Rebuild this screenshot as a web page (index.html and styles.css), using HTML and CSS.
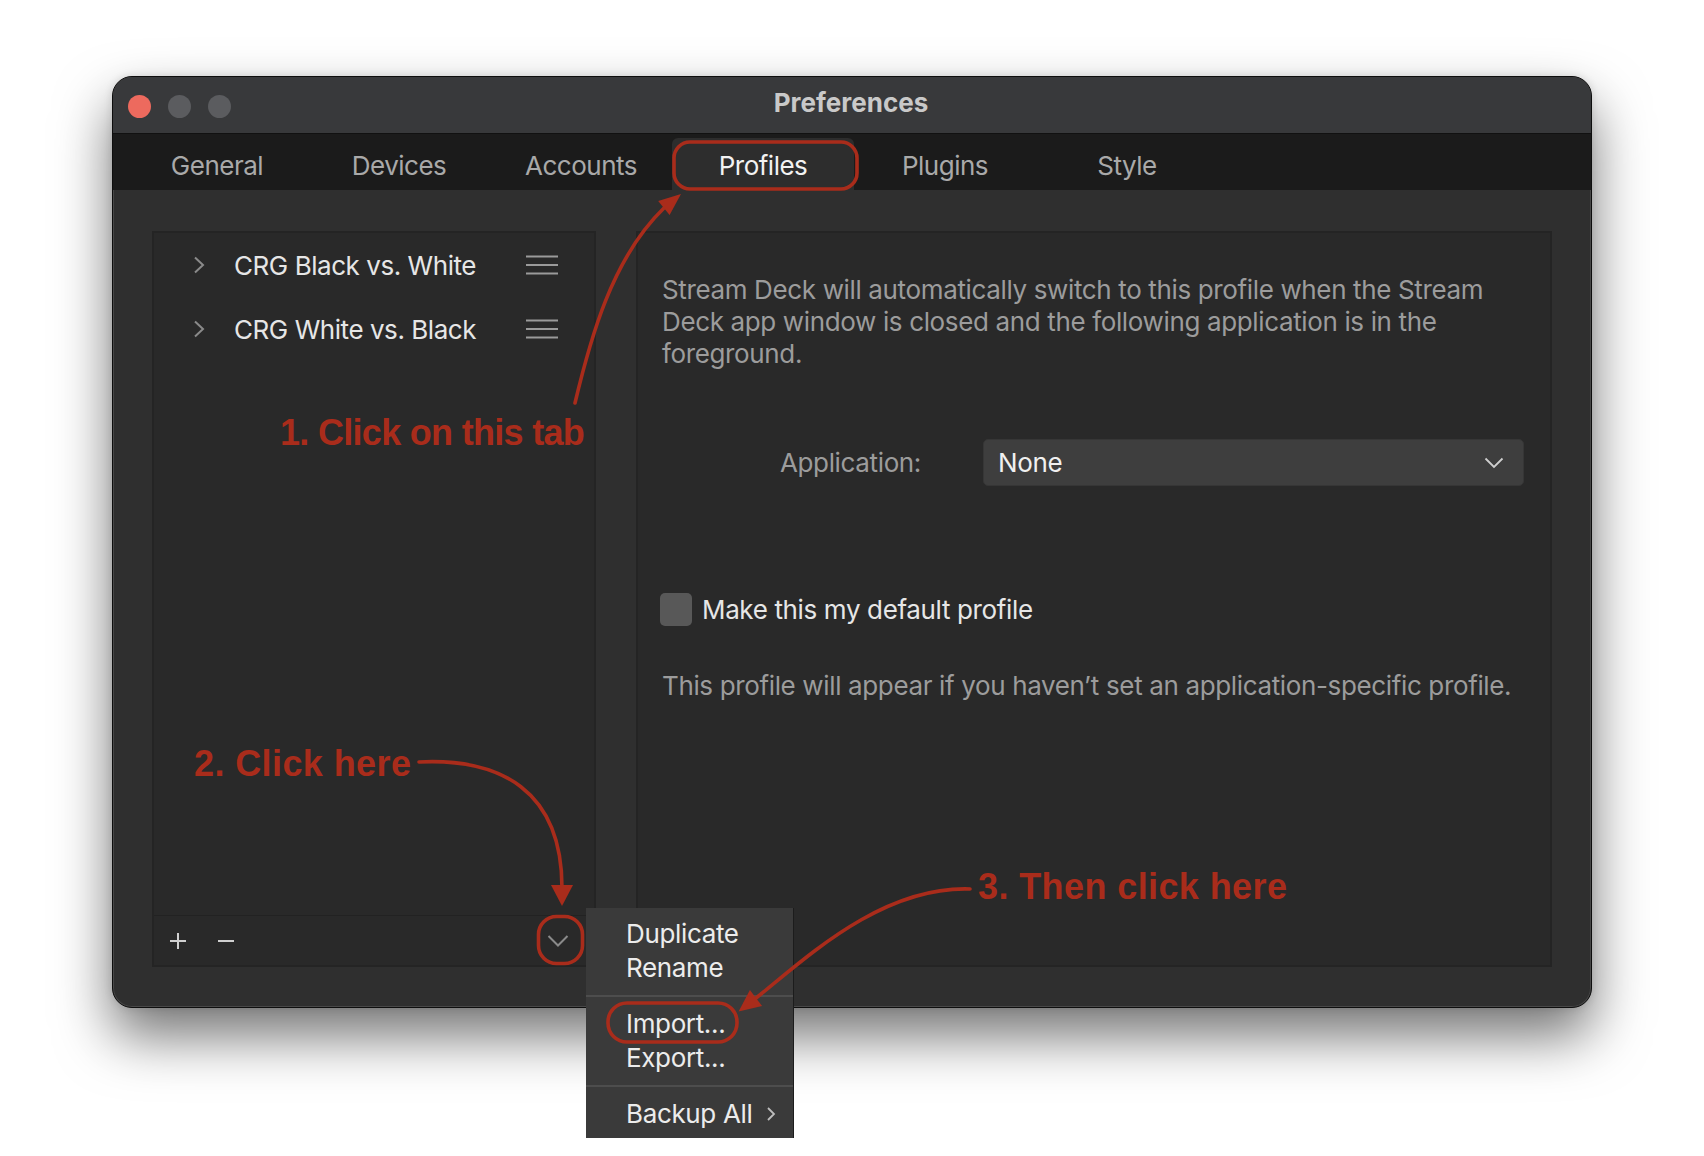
FILE: index.html
```html
<!DOCTYPE html>
<html lang="en">
<head>
<meta charset="utf-8">
<title>Preferences</title>
<link rel="stylesheet" href="styles.css">
</head>
<body>
<div class="stage">
  <div class="window">
    <div class="titlebar">
      <div class="lights">
        <span class="light red"></span>
        <span class="light"></span>
        <span class="light"></span>
      </div>
      <div class="title">Preferences</div>
      <div class="spacer"></div>
    </div>
    <div class="tabs">
      <div class="tab">General</div>
      <div class="tab">Devices</div>
      <div class="tab">Accounts</div>
      <div class="tab active">Profiles</div>
      <div class="tab">Plugins</div>
      <div class="tab">Style</div>
    </div>
    <div class="content">
      <div class="panel left-panel">
        <div class="list">
          <div class="row">
            <svg class="chev" width="12" height="18" viewBox="0 0 12 18"><path d="M2 1.5 L10 9 L2 16.5" fill="none" stroke="#8a8a8a" stroke-width="2"/></svg>
            <span class="name">CRG Black vs. White</span>
            <svg class="burger" width="32" height="20" viewBox="0 0 32 20"><path d="M0 1.5 H32 M0 10 H32 M0 18.5 H32" stroke="#9a9a9a" stroke-width="2"/></svg>
          </div>
          <div class="row">
            <svg class="chev" width="12" height="18" viewBox="0 0 12 18"><path d="M2 1.5 L10 9 L2 16.5" fill="none" stroke="#8a8a8a" stroke-width="2"/></svg>
            <span class="name">CRG White vs. Black</span>
            <svg class="burger" width="32" height="20" viewBox="0 0 32 20"><path d="M0 1.5 H32 M0 10 H32 M0 18.5 H32" stroke="#9a9a9a" stroke-width="2"/></svg>
          </div>
        </div>
        <div class="toolbar">
          <svg class="tool" width="18" height="18" viewBox="0 0 18 18"><path d="M9 1 V17 M1 9 H17" stroke="#d0d0d0" stroke-width="2"/></svg>
          <svg class="tool" width="18" height="18" viewBox="0 0 18 18"><path d="M1 9 H17" stroke="#d0d0d0" stroke-width="2"/></svg>
          <svg class="tool more" width="22" height="14" viewBox="0 0 22 14"><path d="M1.5 2 L11 11.5 L20.5 2" fill="none" stroke="#8a8a8a" stroke-width="2"/></svg>
        </div>
      </div>
      <div class="panel right-panel">
        <p class="desc">Stream Deck will automatically switch to this profile when the Stream Deck app window is closed and the following application is in the foreground.</p>
        <div class="app-row">
          <span class="app-label">Application:</span>
          <div class="select">
            <span>None</span>
            <svg width="20" height="12" viewBox="0 0 20 12"><path d="M1.5 1.5 L10 10 L18.5 1.5" fill="none" stroke="#cfcfcf" stroke-width="1.8"/></svg>
          </div>
        </div>
        <div class="check-row">
          <span class="checkbox"></span>
          <span class="check-label">Make this my default profile</span>
        </div>
        <p class="note">This profile will appear if you haven’t set an application-specific profile.</p>
      </div>
    </div>
    <div class="menu">
      <div class="item">Duplicate</div>
      <div class="item">Rename</div>
      <div class="sep"></div>
      <div class="item">Import...</div>
      <div class="item">Export...</div>
      <div class="sep"></div>
      <div class="item sub">Backup All
        <svg width="10" height="16" viewBox="0 0 10 16"><path d="M2 2 L8 8 L2 14" fill="none" stroke="#bdbdbd" stroke-width="1.8"/></svg>
      </div>
    </div>
  </div>

  <svg class="marks" width="1704" height="1156" viewBox="0 0 1704 1156">
    <g fill="none" stroke="#a92c1b" stroke-width="3.6" stroke-linecap="round">
      <rect x="674" y="142" width="183" height="47" rx="16"/>
      <rect x="538.5" y="916.5" width="44" height="47" rx="18"/>
      <rect x="608" y="1003" width="129" height="39" rx="19"/>
      <path d="M575 403 C 590 340 612 258 664 208"/>
      <path d="M419 762 C 500 758 562 790 562 888"/>
      <path d="M970 889 C 880 886 803 961 756 998"/>
    </g>
    <g fill="#a92c1b">
      <polygon points="681,194 669.6,214.9 658.2,200.9"/>
      <polygon points="562,906 551,885 573,885"/>
      <polygon points="738.6,1011.4 762.1,1005.9 749.9,990.1"/>
    </g>
  </svg>
  <div class="callout c1">1. Click on this tab</div>
  <div class="callout c2">2. Click here</div>
  <div class="callout c3">3. Then click here</div>
</div>
</body>
</html>
```

FILE: styles.css
```css
* { box-sizing: border-box; }

html, body {
  margin: 0;
  background: #ffffff;
}

body {
  font-family: Inter, "Noto Sans", sans-serif;
  width: 1704px;
  height: 1156px;
  overflow: hidden;
}

.stage {
  position: relative;
  width: 1704px;
  height: 1156px;
  padding: 76px 0 0 112px;
}

.window {
  position: relative;
  width: 1480px;
  height: 932px;
  border-radius: 20px;
  background: #2f2f2f;
  border: 1px solid #0e0e0e;
  box-shadow: 0 28px 55px rgba(0, 0, 0, 0.55), 0 0 8px rgba(0, 0, 0, 0.12), inset 0 0 0 1px rgba(255, 255, 255, 0.12);
  display: flex;
  flex-direction: column;
}

/* Title bar */
.titlebar {
  height: 57px;
  background: #38393b;
  border-radius: 19px 19px 0 0;
  border-bottom: 1px solid #111111;
  display: grid;
  grid-template-columns: 1fr auto 1fr;
  align-items: center;
}

.lights {
  display: flex;
  gap: 17px;
  padding-left: 15px;
  padding-top: 2px;
}

.light {
  width: 23px;
  height: 23px;
  border-radius: 50%;
  background: #5b5c5f;
}

.light.red { background: #ed6a5e; }

.title {
  color: #c9c9c9;
  font-weight: 700;
  font-size: 26px;
  letter-spacing: 0;
  margin-top: -5px;
  margin-left: -2px;
}

/* Tabs */
.tabs {
  height: 56px;
  background: #1b1b1b;
  display: flex;
  align-items: flex-end;
  padding-left: 13px;
}

.tab {
  width: 182px;
  height: 52px;
  padding-top: 12px;
  text-align: center;
  font-size: 26px;
  line-height: 32px;
  letter-spacing: -0.5px;
  color: #a9a9a9;
}

.tab.active {
  background: #2d2d2d;
  border-radius: 6px 6px 0 0;
  color: #f2f2f2;
}

/* Content */
.content {
  flex: 1;
  display: flex;
  gap: 40px;
  padding: 41px 39px 40px 39px;
}

.panel {
  background: #292929;
  border: 2px solid #242424;
}

.left-panel {
  width: 444px;
  display: flex;
  flex-direction: column;
}

.list { flex: 1; }

.row {
  height: 64px;
  display: flex;
  align-items: center;
  padding-left: 39px;
  padding-right: 36px;
  color: #e6e6e6;
  font-size: 26px;
  letter-spacing: -0.45px;
}

.row .name {
  flex: 1;
  margin-left: 29px;
}

.toolbar {
  height: 50px;
  border-top: 1px solid #222222;
  display: flex;
  align-items: center;
  padding-left: 15px;
  padding-right: 25px;
}

.tool + .tool { margin-left: 30px; }

.tool.more { margin-left: auto; }

.right-panel {
  flex: 1;
  padding: 41px 24px 0 24px;
  font-size: 26px;
  letter-spacing: -0.36px;
}

.desc {
  margin: 0;
  color: #9c9c9c;
  line-height: 32px;
}

.app-row {
  display: flex;
  align-items: center;
  margin-top: 69px;
  padding-right: 2px;
}

.app-label {
  width: 259px;
  text-align: right;
  color: #9c9c9c;
}

.select {
  flex: 1;
  margin-left: 62px;
  height: 47px;
  background: #3e3e3e;
  border: 1px solid #363636;
  border-radius: 5px;
  display: flex;
  align-items: center;
  justify-content: space-between;
  padding: 0 19px 0 14px;
  color: #f0f0f0;
}

.check-row {
  display: flex;
  align-items: center;
  margin-top: 107px;
}

.checkbox {
  width: 32px;
  height: 33px;
  margin-left: -2px;
  border-radius: 5px;
  background: #585858;
}

.check-label {
  margin-left: 10px;
  color: #e6e6e6;
}

.note {
  margin: 44px 0 0 0;
  color: #9c9c9c;
  line-height: 32px;
}

/* Context menu */
.menu {
  position: absolute;
  left: 473px;
  top: 831px;
  width: 207px;
  padding: 9px 0 7px 0;
  background: #3a3a3a;
  box-shadow: 1px 0 0 #1c1c1c;
  font-size: 26px;
  letter-spacing: -0.35px;
  color: #ececec;
}

.item {
  height: 34px;
  line-height: 34px;
  padding-left: 40px;
}

.item.sub {
  display: flex;
  align-items: center;
  gap: 14px;
}

.sep {
  height: 2px;
  background: #4d4d4d;
  margin: 10px 0;
}

/* Annotations */
.marks {
  position: absolute;
  left: 0;
  top: 0;
  pointer-events: none;
}

.callout {
  position: absolute;
  font-family: "Liberation Sans", Arial, sans-serif;
  font-weight: 700;
  font-size: 36px;
  line-height: 36px;
  color: #a92c1b;
  white-space: nowrap;
}

.c1 { left: 280px; top: 415px; letter-spacing: -0.7px; }
.c2 { left: 194px; top: 746px; letter-spacing: 0.4px; }
.c3 { left: 978px; top: 869px; letter-spacing: 0.4px; }
```
